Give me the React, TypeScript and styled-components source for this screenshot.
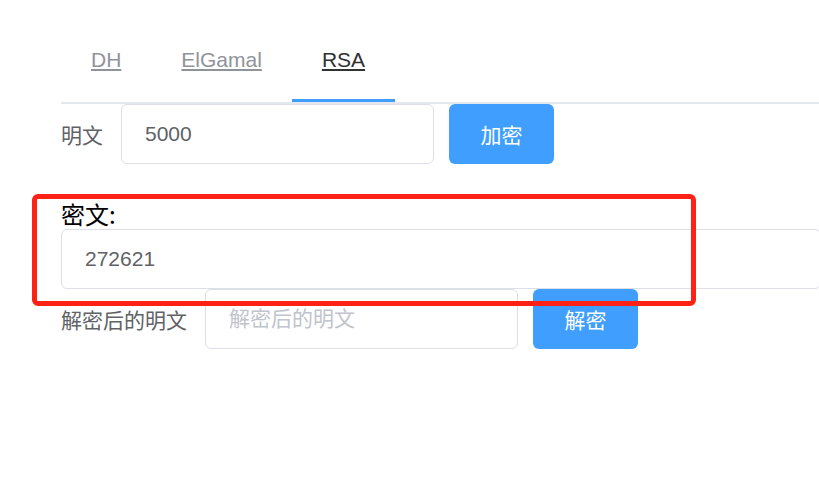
import React from "react";
import styled, { createGlobalStyle } from "styled-components";

const GlobalStyle = createGlobalStyle`
  html, body {
    margin: 0;
    padding: 0;
    background: #ffffff;
    overflow: hidden;
  }
  body {
    font-family: "Liberation Sans", "Noto Sans CJK SC", sans-serif;
  }
`;

const Viewport = styled.div`
  position: relative;
  width: 819px;
  height: 492px;
  overflow: hidden;
`;

const Content = styled.div`
  width: 900px;
  padding: 45px 0 0 61px;
  box-sizing: border-box;
`;

const TabNav = styled.nav`
  display: flex;
  border-bottom: 2px solid #e4e7ed;
`;

const TabItem = styled.div<{ $active?: boolean }>`
  padding: 0 30px 24px;
  border-bottom: 3px solid ${(p) => (p.$active ? "#409eff" : "transparent")};
  line-height: 30px;
  font-size: 21px;
  font-family: "Liberation Sans", "Noto Sans CJK SC", sans-serif;
  &:first-child {
    padding-left: 30px;
  }
`;

const TabLink = styled.a<{ $active?: boolean }>`
  color: ${(p) => (p.$active ? "#303133" : "#909399")};
  text-decoration: underline;
  text-underline-offset: 2px;
  cursor: pointer;
`;

const Row = styled.div`
  display: flex;
  align-items: center;
  height: 60px;
`;

const Label = styled.span`
  font-family: "Noto Sans CJK SC", sans-serif;
  font-size: 21px;
  color: #606266;
  margin-right: 18px;
  white-space: nowrap;
`;

const TextInput = styled.input<{ $wide?: boolean }>`
  box-sizing: border-box;
  width: ${(p) => (p.$wide ? "760px" : "313px")};
  height: 60px;
  padding: 0 23px;
  border: 1px solid #dcdfe6;
  border-radius: 6px;
  outline: none;
  background: #fff;
  color: #606266;
  font-size: 21px;
  font-family: "Liberation Sans", "Noto Sans CJK SC", sans-serif;
  &::placeholder {
    color: #c0c4cc;
    font-family: "Noto Sans CJK SC", sans-serif;
  }
`;

const Button = styled.button`
  box-sizing: border-box;
  margin-left: 15px;
  width: 105px;
  height: 60px;
  border: none;
  border-radius: 6px;
  background: #409eff;
  color: #ffffff;
  font-size: 21px;
  font-family: "Noto Sans CJK SC", sans-serif;
  cursor: pointer;
`;

const CipherBlock = styled.div`
  margin-top: 35px;
  display: flex;
  flex-direction: column;
`;

const CipherTitle = styled.div`
  font-family: "Noto Sans CJK SC", sans-serif;
  font-size: 24px;
  line-height: 30px;
  color: #000000;
`;

const Highlight = styled.div`
  position: absolute;
  left: 32px;
  top: 194px;
  width: 664px;
  height: 112px;
  box-sizing: border-box;
  border: 5px solid #fe2216;
  border-radius: 6px;
  pointer-events: none;
`;

export default function App() {
  const tabs = ["DH", "ElGamal", "RSA"];
  return (
    <Viewport>
      <GlobalStyle />
      <Content>
        <TabNav>
          {tabs.map((t) => (
            <TabItem key={t} $active={t === "RSA"}>
              <TabLink $active={t === "RSA"}>{t}</TabLink>
            </TabItem>
          ))}
        </TabNav>
        <Row>
          <Label>明文</Label>
          <TextInput defaultValue="5000" />
          <Button>加密</Button>
        </Row>
        <CipherBlock>
          <CipherTitle>密文:</CipherTitle>
          <TextInput $wide defaultValue="272621" />
        </CipherBlock>
        <Row>
          <Label>解密后的明文</Label>
          <TextInput placeholder="解密后的明文" />
          <Button>解密</Button>
        </Row>
      </Content>
      <Highlight />
    </Viewport>
  );
}
